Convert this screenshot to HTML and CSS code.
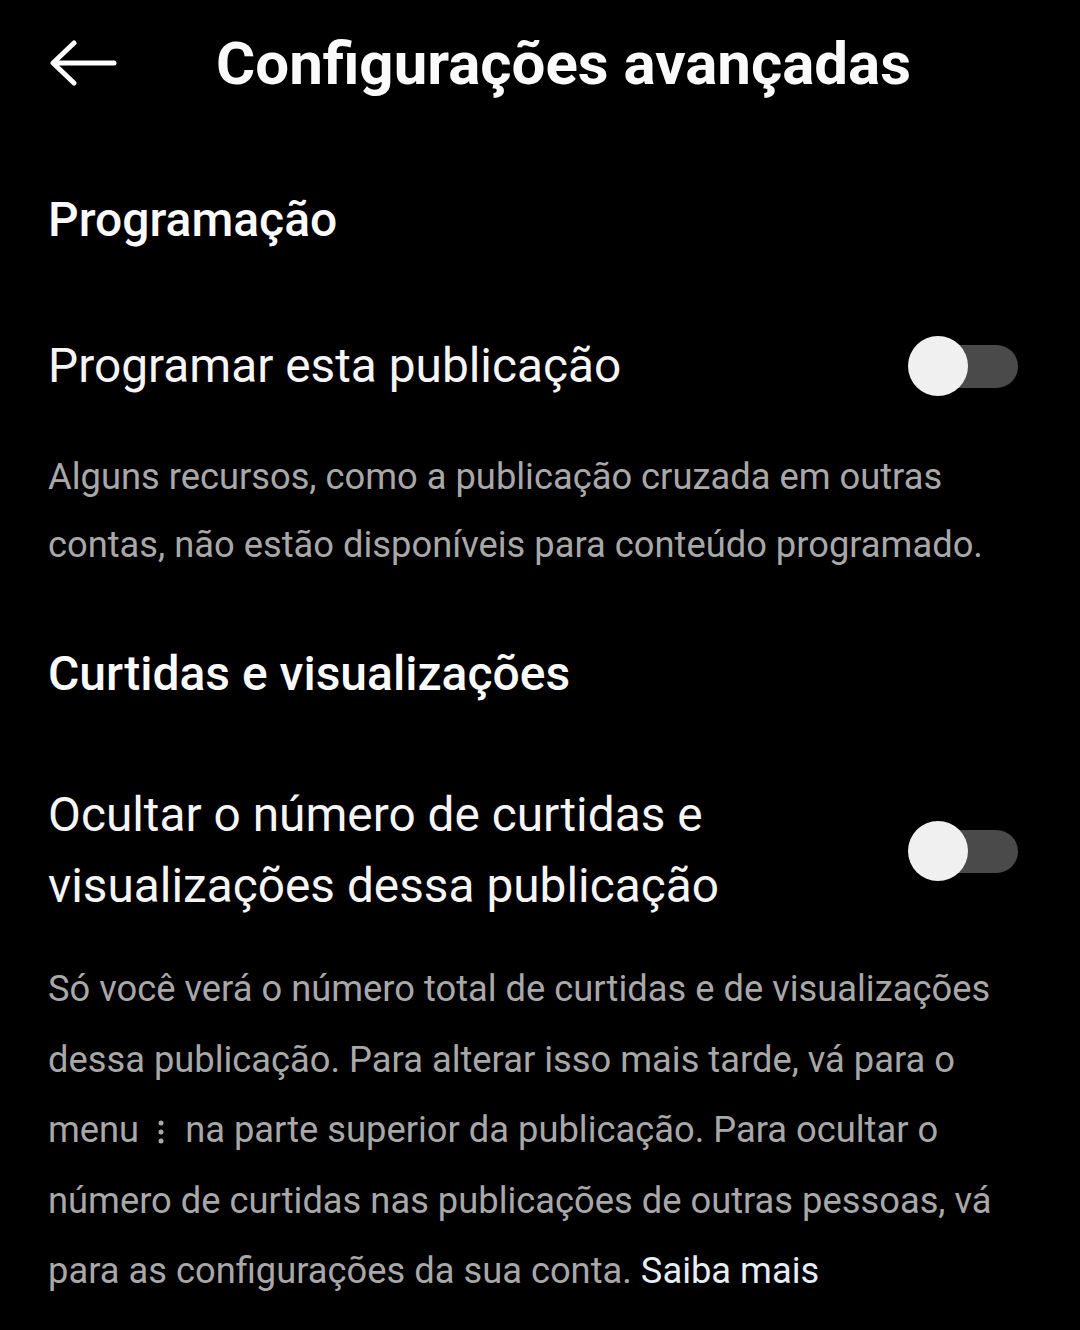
FILE: index.html
```html
<!DOCTYPE html>
<html lang="pt-BR">
<head>
  <meta charset="UTF-8">
  <meta name="viewport" content="width=device-width, initial-scale=1.0">
  <title>Configurações avançadas</title>
  <link rel="stylesheet" href="styles.css">
</head>
<body>
  <header class="topbar">
    <button class="back" aria-label="Voltar">
      <svg width="70" height="46" viewBox="0 0 70 46">
        <path d="M66 23H6M26 3L5 23l21 20" fill="none" stroke="#fff" stroke-width="5" stroke-linecap="round" stroke-linejoin="round"/>
      </svg>
    </button>
    <h1>Configurações avançadas</h1>
  </header>

  <section class="group group-schedule">
    <h2>Programação</h2>
    <div class="setting">
      <span class="setting-label">Programar esta publicação</span>
      <span class="toggle"><span class="knob"></span></span>
    </div>
    <p class="hint hint-short">Alguns recursos, como a publicação cruzada em outras contas, não estão disponíveis para conteúdo programado.</p>
  </section>

  <section class="group group-likes">
    <h2>Curtidas e visualizações</h2>
    <div class="setting">
      <span class="setting-label">Ocultar o número de curtidas e visualizações dessa publicação</span>
      <span class="toggle"><span class="knob"></span></span>
    </div>
    <p class="hint hint-long">Só você verá o número total de curtidas e de visualizações dessa publicação. Para alterar isso mais tarde, vá para o menu <svg class="dots" width="10" height="24" viewBox="0 0 10 24"><circle cx="5" cy="3" r="2.5"/><circle cx="5" cy="12" r="2.5"/><circle cx="5" cy="21" r="2.5"/></svg> na parte superior da publicação. Para ocultar o número de curtidas nas publicações de outras pessoas, vá para as configurações da sua conta. <a href="#" class="more">Saiba mais</a></p>
  </section>
</body>
</html>
```

FILE: styles.css
```css
body {
  margin: 0;
  background: #000;
  color: #f5f5f5;
  font-family: Roboto, "Noto Sans", sans-serif;
}
.topbar {
  display: flex;
  align-items: center;
  height: 126px;
  padding-left: 48px;
}
.back {
  display: flex;
  background: none;
  border: none;
  padding: 0;
  margin-right: 98px;
}
h1 {
  margin: 0;
  font-size: 60px;
  font-weight: 700;
  color: #fafafa;
}
.group {
  padding: 0 48px;
}
h2 {
  margin: 0;
  font-size: 48px;
  font-weight: 500;
  line-height: 60px;
  color: #fafafa;
}
.group-schedule h2 {
  margin-top: 64px;
}
.group-likes h2 {
  margin-top: 65px;
}
.setting {
  display: flex;
  align-items: center;
  justify-content: space-between;
}
.group-schedule .setting {
  margin-top: 81px;
}
.group-likes .setting {
  margin-top: 76px;
}
.setting-label {
  font-size: 47.8px;
  line-height: 71px;
  max-width: 700px;
  color: #f5f5f5;
}
.toggle {
  position: relative;
  width: 98px;
  height: 43px;
  margin-right: 14px;
  border-radius: 22px;
  background: #4a4a4a;
}
.knob {
  position: absolute;
  left: -12px;
  top: -9px;
  width: 60px;
  height: 60px;
  border-radius: 50%;
  background: #f0f0f0;
}
.hint {
  margin: 0;
  font-size: 36.3px;
  color: #a8a8a8;
}
.hint-short {
  margin-top: 41px;
  line-height: 68px;
}
.hint-long {
  margin-top: 32px;
  line-height: 70.5px;
}
.dots {
  fill: #a8a8a8;
  margin: 0 10px 0 8px;
  vertical-align: -2px;
}
.more {
  color: #e6edf5;
  text-decoration: none;
}
```
